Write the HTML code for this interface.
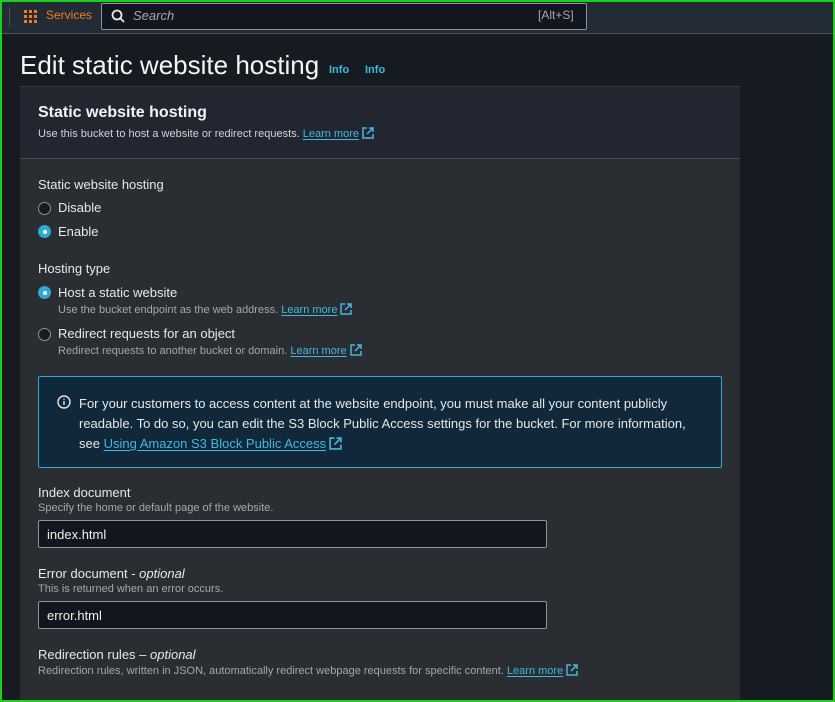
<!DOCTYPE html>
<html><head><meta charset="utf-8"><style>
*{margin:0;padding:0;box-sizing:border-box}
body{width:835px;height:702px;overflow:hidden;background:#161a21;font-family:"Liberation Sans",sans-serif;color:#e6e8ea;position:relative}
.a{position:absolute;white-space:nowrap}
.frame{position:absolute;left:0;top:0;width:835px;height:702px;border:2px solid #1bd21b;border-right-width:2px;pointer-events:none;z-index:10}
.nav{position:absolute;left:0;top:0;width:835px;height:34px;background:#232b37;border-bottom:1px solid #4a525c}
.lnk{color:#42b8dd;text-decoration:underline;text-underline-offset:2px}
.ext{display:inline-block;vertical-align:-2px;margin-left:3px}
.s{font-size:13px}
.xs{font-size:11px;color:#a3a8ae}
.radio{position:absolute;width:13px;height:13px;border-radius:50%;border:1.5px solid #8d949c;background:#161a21}
.radio.on{border:none;background:#2ea9d6}
.radio.on::after{content:"";position:absolute;left:4.5px;top:4.5px;width:4px;height:4px;border-radius:50%;background:#fff}
.inp{position:absolute;left:38px;width:509px;height:28px;background:#12171f;border:1px solid #8d949c;border-radius:2px;font-size:13px;padding:6px 8px;color:#f0f0f0}
</style></head><body>
<div class="nav"></div>
<div class="a" style="left:9px;top:7px;width:1px;height:20px;background:#4a525c"></div>
<svg class="a" style="left:24px;top:10px" width="14" height="14" viewBox="0 0 14 14" fill="#f27c21"><rect x="0" y="0" width="3" height="3"/><rect x="5" y="0" width="3" height="3"/><rect x="10" y="0" width="3" height="3"/><rect x="0" y="5" width="3" height="3"/><rect x="5" y="5" width="3" height="3"/><rect x="10" y="5" width="3" height="3"/><rect x="0" y="10" width="3" height="3"/><rect x="5" y="10" width="3" height="3"/><rect x="10" y="10" width="3" height="3"/></svg>
<div class="a" style="left:46px;top:8px;font-size:12px;color:#f27c21">Services</div>
<div class="a" style="left:101px;top:3px;width:486px;height:27px;background:#12171f;border:1px solid #8d949c;border-radius:2px"></div>
<svg class="a" style="left:111px;top:9px" width="14" height="14" viewBox="0 0 14 14" fill="none" stroke="#e6e8ea" stroke-width="1.8"><circle cx="6" cy="6" r="4.5"/><path d="M9.3 9.3 13 13"/></svg>
<div class="a" style="left:133px;top:8px;font-size:13px;font-style:italic;color:#a3a8ae">Search</div>
<div class="a" style="left:538px;top:8px;font-size:12px;color:#a3a8ae">[Alt+S]</div>

<div class="a" style="left:20px;top:50px;font-size:26px;color:#f4f4f4">Edit static website hosting</div>
<div class="a" style="left:329px;top:64px;font-size:11px;font-weight:bold;color:#42b8dd">Info</div>
<div class="a" style="left:365px;top:64px;font-size:11px;font-weight:bold;color:#42b8dd">Info</div>

<div class="a" style="left:20px;top:86px;width:720px;height:616px;background:#2a2d32"></div>
<div class="a" style="left:20px;top:86px;width:720px;height:73px;background:#212630;border-bottom:1px solid #464b52;border-top:1px solid #353a41"></div>
<div class="a" style="left:38px;top:104px;font-size:16px;font-weight:bold;color:#f4f4f4">Static website hosting</div>
<div class="a" style="left:38px;top:127px;font-size:11px;color:#d1d5da">Use this bucket to host a website or redirect requests. <span class="lnk">Learn more</span><svg class="ext" width="12" height="12" viewBox="0 0 12 12" fill="none" stroke="#42b8dd" stroke-width="1.5"><path d="M5 1H1v10h10V7M7 1h4v4M11 1 5 7"/></svg></div>

<div class="a s" style="left:38px;top:177px">Static website hosting</div>
<div class="radio" style="left:38px;top:202px"></div><div class="a s" style="left:58px;top:200px">Disable</div>
<div class="radio on" style="left:38px;top:225px"></div><div class="a s" style="left:58px;top:224px">Enable</div>

<div class="a s" style="left:38px;top:261px">Hosting type</div>
<div class="radio on" style="left:38px;top:286px"></div><div class="a s" style="left:58px;top:285px">Host a static website</div>
<div class="a xs" style="left:58px;top:303px">Use the bucket endpoint as the web address. <span class="lnk">Learn more</span><svg class="ext" width="12" height="12" viewBox="0 0 12 12" fill="none" stroke="#42b8dd" stroke-width="1.5"><path d="M5 1H1v10h10V7M7 1h4v4M11 1 5 7"/></svg></div>
<div class="radio" style="left:38px;top:328px"></div><div class="a s" style="left:58px;top:326px">Redirect requests for an object</div>
<div class="a xs" style="left:58px;top:344px">Redirect requests to another bucket or domain. <span class="lnk">Learn more</span><svg class="ext" width="12" height="12" viewBox="0 0 12 12" fill="none" stroke="#42b8dd" stroke-width="1.5"><path d="M5 1H1v10h10V7M7 1h4v4M11 1 5 7"/></svg></div>

<div class="a" style="left:38px;top:376px;width:684px;height:92px;background:#11283a;border:1px solid #2ea9d6;border-radius:2px"></div>
<svg class="a" style="left:57px;top:395px" width="14" height="14" viewBox="0 0 14 14" fill="none" stroke="#e6e8ea" stroke-width="1.4"><circle cx="7" cy="7" r="6"/><path d="M7 6v4M7 3.6v1.2"/></svg>
<div class="a s" style="left:79px;top:394px;line-height:20px;color:#e6e8ea">For your customers to access content at the website endpoint, you must make all your content publicly<br>readable. To do so, you can edit the S3 Block Public Access settings for the bucket. For more information,<br>see <span class="lnk">Using Amazon S3 Block Public Access</span><svg class="ext" width="13" height="13" viewBox="0 0 12 12" fill="none" stroke="#42b8dd" stroke-width="1.5"><path d="M5 1H1v10h10V7M7 1h4v4M11 1 5 7"/></svg></div>

<div class="a s" style="left:38px;top:485px">Index document</div>
<div class="a xs" style="left:38px;top:502px">Specify the home or default page of the website.</div>
<div class="inp" style="top:520px">index.html</div>

<div class="a s" style="left:38px;top:566px">Error document - <i>optional</i></div>
<div class="a xs" style="left:38px;top:583px">This is returned when an error occurs.</div>
<div class="inp" style="top:601px">error.html</div>

<div class="a s" style="left:38px;top:647px">Redirection rules – <i>optional</i></div>
<div class="a xs" style="left:38px;top:664px">Redirection rules, written in JSON, automatically redirect webpage requests for specific content. <span class="lnk">Learn more</span><svg class="ext" width="12" height="12" viewBox="0 0 12 12" fill="none" stroke="#42b8dd" stroke-width="1.5"><path d="M5 1H1v10h10V7M7 1h4v4M11 1 5 7"/></svg></div>
<div class="frame"></div>
</body></html>
